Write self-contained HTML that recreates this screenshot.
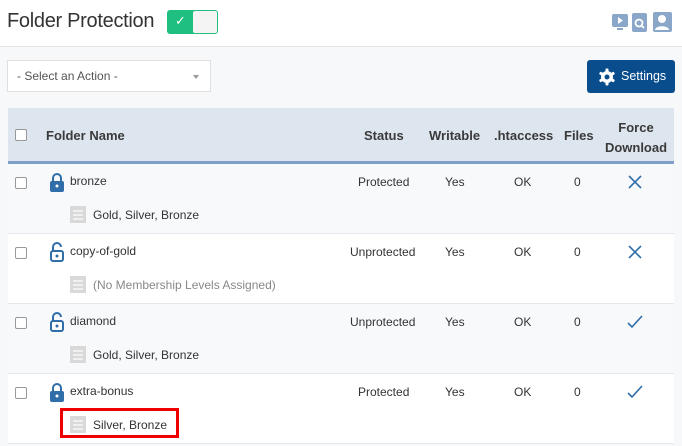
<!DOCTYPE html>
<html><head><style>
body{margin:0;width:682px;height:446px;background:#f6f8fa;font-family:"Liberation Sans",sans-serif;color:#333;overflow:hidden;position:relative}
.top{position:absolute;left:0;top:0;width:682px;height:46px;background:#fff;border-bottom:1px solid #e2e5e8}
.title{position:absolute;left:7px;top:10px;font-size:20px;color:#333;letter-spacing:-0.3px}
.tog{position:absolute;left:167px;top:10px;width:51px;height:24px;border-radius:3px;background:#1fbf7f;border:1px solid #1fbf7f;box-sizing:border-box}
.tog .k{position:absolute;right:0;top:0;width:24px;height:22px;background:#f4f4f4;border-radius:2px}
.tog .c{position:absolute;left:7px;top:2px;color:#fff;font-size:13px}
.sel{position:absolute;left:7px;top:60px;width:204px;height:32px;background:#fff;border:1px solid #e0e0e0;box-sizing:border-box;font-size:12px;color:#555;padding:8px 0 0 9px}
.sel:after{content:"";position:absolute;right:11px;top:14px;border:3px solid transparent;border-top:4px solid #999}
.btn{position:absolute;left:587px;top:60px;width:88px;height:33px;background:#0a4d8c;border-radius:3px;color:#fff;font-size:12.5px}
.tbl{position:absolute;left:8px;top:108px;width:666px}
.hd{height:53px;background:#dde5ee;border-bottom:3px solid #7d9fc8;position:relative;font-weight:bold;font-size:13px;color:#3a3a3a}
.row{height:69px;border-bottom:1px solid #e4e8ec;position:relative;font-size:12px;background:#fff}
.row.a{background:#f7f9fb}
.ab{position:absolute}
.cb{position:absolute;width:10px;height:10px;border:1px solid #999;border-radius:2px;background:#fff}
.doc{position:absolute;left:62px;top:42px;width:16px;height:17px;background:#d9d9d9}
.doc i{position:absolute;left:3px;width:10px;height:1.5px;background:#f0f0f0}
.lv{position:absolute;left:85px;top:44px;color:#333}
</style></head><body>
<div class="top">
<div class="title">Folder Protection</div>
<div class="tog"><span class="c">✓</span><div class="k"></div></div>
<svg style="position:absolute;left:611px;top:12px" width="64" height="20">
<rect x="1" y="2" width="16" height="13" rx="2" fill="#8aa6c8"/><path d="M7 5v7l5-3.5z" fill="#fff"/><rect x="6" y="16" width="6" height="2" fill="#8aa6c8"/>
<rect x="21" y="1" width="15" height="19" rx="2" fill="#8aa6c8"/><circle cx="28" cy="11" r="3.5" fill="none" stroke="#fff" stroke-width="1.8"/><path d="M30.5 13.5l2.5 2.5" stroke="#fff" stroke-width="1.8"/>
<rect x="42" y="0" width="19" height="20" rx="2" fill="#8aa6c8"/><circle cx="51" cy="7" r="4" fill="#fff"/><path d="M44 18c0-5 14-5 14 0z" fill="#fff"/>
</svg>
</div>
<div class="sel">- Select an Action -</div>
<div class="btn"><svg style="position:absolute;left:11px;top:8px" width="18" height="18" viewBox="0 0 18 18"><g fill="#fff"><circle cx="9" cy="9" r="6"/><rect x="7.5" y="0.5" width="3" height="17" rx="1"/><rect x="7.5" y="0.5" width="3" height="17" rx="1" transform="rotate(60 9 9)"/><rect x="7.5" y="0.5" width="3" height="17" rx="1" transform="rotate(120 9 9)"/></g><circle cx="9" cy="9" r="2.5" fill="#0a4d8c"/></svg><span style="position:absolute;left:34px;top:9px">Settings</span></div>
<div class="tbl">
<div class="hd">
<div class="cb" style="left:7px;top:21px"></div>
<span class="ab" style="left:38px;top:20px">Folder Name</span>
<span class="ab" style="left:356px;top:20px">Status</span>
<span class="ab" style="left:421px;top:20px">Writable</span>
<span class="ab" style="left:486px;top:20px">.htaccess</span>
<span class="ab" style="left:556px;top:20px">Files</span>
<span class="ab" style="left:596px;top:10px;text-align:center;width:64px;line-height:20px">Force Download</span>
</div>
<div class="row a">
<div class="cb" style="left:7px;top:13px"></div>
<svg class="ab" style="left:41px;top:8px" width="16" height="20"><path d="M4 9V6a4 4 0 0 1 8 0v3" fill="none" stroke="#2f6ea8" stroke-width="2"/><rect x="1" y="9" width="14" height="11" rx="2" fill="#2f6ea8"/><circle cx="8" cy="14" r="1.5" fill="#fff"/></svg>
<span class="ab" style="left:62px;top:10px">bronze</span>
<span class="ab" style="left:350px;top:11px">Protected</span>
<span class="ab" style="left:437px;top:11px">Yes</span>
<span class="ab" style="left:506px;top:11px">OK</span>
<span class="ab" style="left:566px;top:11px">0</span>
<svg class="ab" style="left:620px;top:11px" width="14" height="14"><path d="M1 1l12 12M13 1L1 13" stroke="#2f6ea8" stroke-width="1.6"/></svg>
<div class="doc"><i style="top:4px"></i><i style="top:8px"></i><i style="top:12px"></i></div><span class="lv">Gold, Silver, Bronze</span>
</div>
<div class="row">
<div class="cb" style="left:7px;top:13px"></div>
<svg class="ab" style="left:41px;top:8px" width="16" height="20"><path d="M4 9V5a4 4 0 0 1 8 0" fill="none" stroke="#2f6ea8" stroke-width="2"/><rect x="2" y="9" width="12" height="10" rx="2" fill="#fff" stroke="#2f6ea8" stroke-width="2"/><circle cx="8" cy="14" r="1.5" fill="#2f6ea8"/></svg>
<span class="ab" style="left:62px;top:10px">copy-of-gold</span>
<span class="ab" style="left:342px;top:11px">Unprotected</span>
<span class="ab" style="left:437px;top:11px">Yes</span>
<span class="ab" style="left:506px;top:11px">OK</span>
<span class="ab" style="left:566px;top:11px">0</span>
<svg class="ab" style="left:620px;top:11px" width="14" height="14"><path d="M1 1l12 12M13 1L1 13" stroke="#2f6ea8" stroke-width="1.6"/></svg>
<div class="doc"><i style="top:4px"></i><i style="top:8px"></i><i style="top:12px"></i></div><span class="lv" style="color:#888">(No Membership Levels Assigned)</span>
</div>
<div class="row a">
<div class="cb" style="left:7px;top:13px"></div>
<svg class="ab" style="left:41px;top:8px" width="16" height="20"><path d="M4 9V5a4 4 0 0 1 8 0" fill="none" stroke="#2f6ea8" stroke-width="2"/><rect x="2" y="9" width="12" height="10" rx="2" fill="#fff" stroke="#2f6ea8" stroke-width="2"/><circle cx="8" cy="14" r="1.5" fill="#2f6ea8"/></svg>
<span class="ab" style="left:62px;top:10px">diamond</span>
<span class="ab" style="left:342px;top:11px">Unprotected</span>
<span class="ab" style="left:437px;top:11px">Yes</span>
<span class="ab" style="left:506px;top:11px">OK</span>
<span class="ab" style="left:566px;top:11px">0</span>
<svg class="ab" style="left:619px;top:11px" width="16" height="14"><path d="M1 8l4 4L15 1" fill="none" stroke="#2f6ea8" stroke-width="1.6"/></svg>
<div class="doc"><i style="top:4px"></i><i style="top:8px"></i><i style="top:12px"></i></div><span class="lv">Gold, Silver, Bronze</span>
</div>
<div class="row">
<div class="cb" style="left:7px;top:13px"></div>
<svg class="ab" style="left:41px;top:8px" width="16" height="20"><path d="M4 9V6a4 4 0 0 1 8 0v3" fill="none" stroke="#2f6ea8" stroke-width="2"/><rect x="1" y="9" width="14" height="11" rx="2" fill="#2f6ea8"/><circle cx="8" cy="14" r="1.5" fill="#fff"/></svg>
<span class="ab" style="left:62px;top:10px">extra-bonus</span>
<span class="ab" style="left:350px;top:11px">Protected</span>
<span class="ab" style="left:437px;top:11px">Yes</span>
<span class="ab" style="left:506px;top:11px">OK</span>
<span class="ab" style="left:566px;top:11px">0</span>
<svg class="ab" style="left:619px;top:11px" width="16" height="14"><path d="M1 8l4 4L15 1" fill="none" stroke="#2f6ea8" stroke-width="1.6"/></svg>
<div class="ab" style="left:52px;top:34px;width:119px;height:30px;border:3px solid #e00;box-sizing:border-box"></div>
<div class="doc"><i style="top:4px"></i><i style="top:8px"></i><i style="top:12px"></i></div><span class="lv">Silver, Bronze</span>
</div>
</div>
</body></html>
